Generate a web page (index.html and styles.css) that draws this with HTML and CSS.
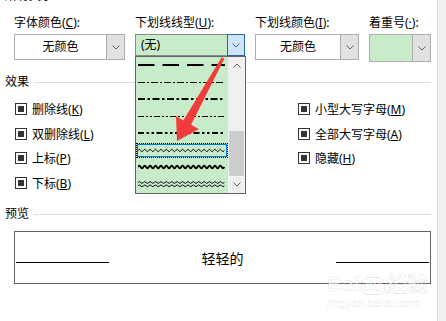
FILE: index.html
```html
<!DOCTYPE html>
<html lang="zh-CN">
<head>
    <meta charset="UTF-8">
    <title>字体 - 效果</title>
    <link rel="stylesheet" href="styles.css">
</head>
<body>
    <div class="dialog">
        <div class="content">
            <div class="cut-title"><span>所有文字</span></div>

            <!-- 颜色和下划线 -->
            <div class="fields">
                <div class="field w-color">
                    <label>字体颜色(<u>C</u>):</label>
                    <div class="combo">
                        <span class="combo-text">无颜色</span>
                        <span class="combo-btn"><svg width="8" height="5"><polyline points="0.5,0.5 4,4 7.5,0.5"/></svg></span>
                    </div>
                </div>
                <div class="field w-style">
                    <label>下划线线型(<u>U</u>):</label>
                    <div class="combo open">
                        <span class="combo-text">(无)</span>
                        <span class="combo-btn"><svg width="8" height="5"><polyline points="0.5,0.5 4,4 7.5,0.5"/></svg></span>
                    </div>
                </div>
                <div class="field w-ucolor">
                    <label>下划线颜色(<u>I</u>):</label>
                    <div class="combo">
                        <span class="combo-text">无颜色</span>
                        <span class="combo-btn"><svg width="8" height="5"><polyline points="0.5,0.5 4,4 7.5,0.5"/></svg></span>
                    </div>
                </div>
                <div class="field w-emph">
                    <label>着重号(<u>·</u>):</label>
                    <div class="combo green">
                        <span class="combo-text"></span>
                        <span class="combo-btn"><svg width="8" height="5"><polyline points="0.5,0.5 4,4 7.5,0.5"/></svg></span>
                    </div>
                </div>
            </div>

            <div class="section-title"><span>效果</span></div>
            <div class="effects">
                <div class="effects-col">
                    <div class="check"><span class="box"></span><span>删除线(<u>K</u>)</span></div>
                    <div class="check"><span class="box"></span><span>双删除线(<u>L</u>)</span></div>
                    <div class="check"><span class="box"></span><span>上标(<u>P</u>)</span></div>
                    <div class="check"><span class="box"></span><span>下标(<u>B</u>)</span></div>
                </div>
                <div class="effects-col">
                    <div class="check"><span class="box"></span><span>小型大写字母(<u>M</u>)</span></div>
                    <div class="check"><span class="box"></span><span>全部大写字母(<u>A</u>)</span></div>
                    <div class="check"><span class="box"></span><span>隐藏(<u>H</u>)</span></div>
                </div>
            </div>

            <div class="section-title preview-title"><span>预览</span></div>
            <div class="preview">
                <span class="preview-line"></span>
                <span class="preview-text">轻轻的</span>
                <span class="preview-line"></span>
            </div>

            <!-- 下拉列表 (展开) -->
            <div class="dropdown-list">
                <div class="list-items">
                    <div class="item"><div class="swatch"><svg width="87" height="8"><line x1="0" y1="4" x2="87" y2="4" stroke-width="2" stroke-dasharray="16.5 8"/></svg></div></div>
                    <div class="item"><div class="swatch"><svg width="87" height="8"><line x1="0" y1="4.5" x2="87" y2="4.5" stroke-width="1" stroke-dasharray="7 2 2 2"/></svg></div></div>
                    <div class="item"><div class="swatch"><svg width="87" height="8"><line x1="0" y1="4" x2="87" y2="4" stroke-width="2" stroke-dasharray="7 2.5 2.5 2.5"/></svg></div></div>
                    <div class="item"><div class="swatch"><svg width="87" height="8"><line x1="0" y1="4.5" x2="87" y2="4.5" stroke-width="1" stroke-dasharray="6 2 2 2 2 2"/></svg></div></div>
                    <div class="item"><div class="swatch"><svg width="87" height="8"><line x1="0" y1="4" x2="87" y2="4" stroke-width="2" stroke-dasharray="6 2.5 2.5 2.5 2.5 2.5"/></svg></div></div>
                    <div class="item selected"><div class="swatch"><svg width="87" height="8"><path stroke-width="1" d="M0 4.5q1.35-2.4 2.7 0t2.7 0t2.7 0t2.7 0t2.7 0t2.7 0t2.7 0t2.7 0t2.7 0t2.7 0t2.7 0t2.7 0t2.7 0t2.7 0t2.7 0t2.7 0t2.7 0t2.7 0t2.7 0t2.7 0t2.7 0t2.7 0t2.7 0t2.7 0t2.7 0t2.7 0t2.7 0t2.7 0t2.7 0t2.7 0t2.7 0t2.7 0"/></svg></div></div>
                    <div class="item"><div class="swatch"><svg width="87" height="8"><path stroke-width="1.8" d="M0 4q1.35-2.6 2.7 0t2.7 0t2.7 0t2.7 0t2.7 0t2.7 0t2.7 0t2.7 0t2.7 0t2.7 0t2.7 0t2.7 0t2.7 0t2.7 0t2.7 0t2.7 0t2.7 0t2.7 0t2.7 0t2.7 0t2.7 0t2.7 0t2.7 0t2.7 0t2.7 0t2.7 0t2.7 0t2.7 0t2.7 0t2.7 0t2.7 0t2.7 0"/></svg></div></div>
                    <div class="item"><div class="swatch"><svg width="87" height="8"><path stroke-width="1" d="M0 2.5q1.35-1.8 2.7 0t2.7 0t2.7 0t2.7 0t2.7 0t2.7 0t2.7 0t2.7 0t2.7 0t2.7 0t2.7 0t2.7 0t2.7 0t2.7 0t2.7 0t2.7 0t2.7 0t2.7 0t2.7 0t2.7 0t2.7 0t2.7 0t2.7 0t2.7 0t2.7 0t2.7 0t2.7 0t2.7 0t2.7 0t2.7 0t2.7 0t2.7 0"/><path stroke-width="1" d="M0 5.8q1.35-1.8 2.7 0t2.7 0t2.7 0t2.7 0t2.7 0t2.7 0t2.7 0t2.7 0t2.7 0t2.7 0t2.7 0t2.7 0t2.7 0t2.7 0t2.7 0t2.7 0t2.7 0t2.7 0t2.7 0t2.7 0t2.7 0t2.7 0t2.7 0t2.7 0t2.7 0t2.7 0t2.7 0t2.7 0t2.7 0t2.7 0t2.7 0t2.7 0"/></svg></div></div>
                </div>
                <div class="list-scroll">
                    <span class="scroll-btn"><svg width="8" height="5"><polyline points="0.5,4.5 4,1 7.5,4.5"/></svg></span>
                    <span class="scroll-track"><span class="scroll-thumb"></span></span>
                    <span class="scroll-btn"><svg width="8" height="5"><polyline points="0.5,0.5 4,4 7.5,0.5"/></svg></span>
                </div>
            </div>

            <!-- 红色箭头标注 -->
            <svg class="annotation" width="437" height="321">
                <polygon points="221.7,57.3 224.3,58.7 191.1,124.8 199,129 177,141 176,116 183.3,120.4"/>
            </svg>

            <div class="watermark">
                <div class="wm-logo">Bai<span class="wm-du">du</span>经验</div>
                <div class="wm-url">jingyan.baidu.com</div>
            </div>
        </div>
        <div class="page-scroll"></div>
    </div>
</body>
</html>
```

FILE: styles.css
```css
/* 字体对话框 - 效果区域 */
body {
    margin: 0;
    background-color: #ffffff;
    font-family: "Noto Sans", "Noto Sans CJK SC", sans-serif;
    font-size: 12px;
    color: #000;
}

u {
    text-decoration: underline;
    text-underline-offset: 1px;
}

.dialog {
    display: flex;
    width: 446px;
    height: 321px;
    overflow: hidden;
}

.content {
    position: relative;
    width: 437px;
    flex: none;
}

.page-scroll {
    flex: 1;
    background-color: #f0f0f0;
    border-left: 1px solid #dadada;
}

/* 上一组标题, 只露出底边 */
.cut-title {
    height: 3px;
    overflow: hidden;
    padding-left: 5px;
}

.cut-title span {
    display: block;
    margin-top: -12px;
    line-height: 16px;
}

/* 颜色/线型选择行 */
.fields {
    display: flex;
    gap: 10px;
    margin-top: 12px;
    padding-left: 14px;
}

.w-color { width: 111px; }
.w-style { width: 110px; }
.w-ucolor { width: 104px; }
.w-emph { width: 62px; }

.field label {
    display: block;
    height: 16px;
    line-height: 16px;
    margin-bottom: 3px;
    white-space: nowrap;
}

.combo {
    display: flex;
    height: 26px;
    box-sizing: border-box;
    border: 1px solid #adadad;
    background-color: #fff;
}

.combo-text {
    flex: 1;
    text-align: center;
    line-height: 24px;
}

.combo-btn {
    display: flex;
    align-items: center;
    justify-content: center;
    width: 17px;
    background-color: #e1e1e1;
    border-left: 1px solid #adadad;
}

.combo-btn svg polyline,
.scroll-btn svg polyline {
    fill: none;
    stroke: #606060;
    stroke-width: 1;
}

.combo.open {
    height: 22px;
    background-color: #c8ecca;
    border-color: #8a8a8a;
}

.combo.open .combo-text {
    text-align: left;
    padding-left: 5px;
    line-height: 20px;
}

.combo.open .combo-btn {
    width: 16px;
    margin: -1px -1px -1px 0;
    background-color: #cce4f7;
    border: 1px solid #2b64ad;
}

.combo.green {
    height: 28px;
}

.combo.green .combo-text {
    background-color: #c8ecca;
}

/* 分组标题 */
.section-title {
    display: flex;
    align-items: center;
    height: 16px;
    line-height: 16px;
    margin: 12px 6px 0 5px;
}

.section-title::after {
    content: "";
    flex: 1;
    height: 1px;
    margin-left: 5px;
    background-color: #dcdcdc;
}

.preview-title {
    margin-top: 11px;
}

/* 效果复选框 */
.effects {
    display: grid;
    grid-template-columns: 283px 1fr;
    margin-top: 7px;
    padding-left: 15px;
}

.check {
    display: flex;
    align-items: center;
    gap: 5px;
    height: 24.5px;
    white-space: nowrap;
}

.box {
    width: 12px;
    height: 12px;
    box-sizing: border-box;
    border: 1px solid #333;
    padding: 2px;
    background-color: #fff;
}

.box::after {
    content: "";
    display: block;
    width: 6px;
    height: 6px;
    background-color: #333;
}

/* 预览 */
.preview {
    display: flex;
    align-items: center;
    justify-content: space-between;
    height: 53px;
    box-sizing: border-box;
    margin: 9px 6px 0 14px;
    padding: 0 1px;
    border: 1px solid #646464;
}

.preview-line {
    width: 93px;
    height: 1px;
    margin-top: 9px;
    background-color: #000;
}

.preview-text {
    font-size: 14px;
}

/* 展开的下拉列表 */
.dropdown-list {
    position: absolute;
    left: 135px;
    top: 56px;
    display: flex;
    width: 111px;
    height: 138px;
    box-sizing: border-box;
    border: 1px solid #646464;
    background-color: #c8ecca;
    overflow: hidden;
}

.list-items {
    width: 92px;
    margin-top: -1px;
}

.item {
    display: flex;
    align-items: center;
    height: 17.1px;
}

.swatch {
    display: flex;
    align-items: center;
    width: 92px;
    height: 15px;
    box-sizing: border-box;
    padding: 0 2px;
}

.swatch svg line,
.swatch svg path {
    fill: none;
    stroke: #000;
}

.item.selected .swatch {
    border: 1px dotted #000;
    box-shadow: inset 0 0 0 1px #0078d7;
    padding: 0 1px;
}

.list-scroll {
    display: flex;
    flex-direction: column;
    width: 17px;
    background-color: #f0f0f0;
}

.scroll-btn {
    display: flex;
    align-items: center;
    justify-content: center;
    height: 17px;
}

.scroll-track {
    flex: 1;
    display: flex;
    flex-direction: column;
    justify-content: flex-end;
}

.scroll-thumb {
    height: 45px;
    margin: 0 1px;
    background-color: #cdcdcd;
}

/* 标注箭头 */
.annotation {
    position: absolute;
    left: 0;
    top: 0;
    pointer-events: none;
}

.annotation polygon {
    fill: #f23c3c;
}

/* 水印 */
.watermark {
    position: absolute;
    left: 327px;
    top: 272px;
    color: rgba(255, 255, 255, 0.6);
    -webkit-text-stroke: 0.6px rgba(0, 0, 0, 0.12);
    font-family: "Liberation Sans", "Noto Sans CJK SC", sans-serif;
}

.wm-logo {
    font-size: 21px;
    font-weight: bold;
    line-height: 24px;
    white-space: nowrap;
}

.wm-du {
    display: inline-block;
    font-size: 15px;
    line-height: 16px;
    padding: 0 2px;
    margin: 0 1px;
    border: 1px solid rgba(0, 0, 0, 0.1);
    border-radius: 8px 8px 6px 6px;
}

.wm-url {
    font-size: 11px;
    line-height: 14px;
    letter-spacing: 0.3px;
    -webkit-text-stroke: 0.4px rgba(0, 0, 0, 0.12);
}
```
